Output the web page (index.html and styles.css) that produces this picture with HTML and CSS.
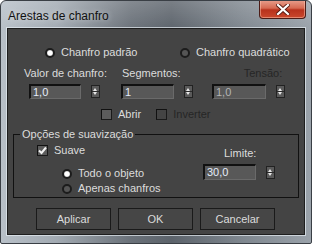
FILE: index.html
```html
<!DOCTYPE html>
<html lang="pt">
<head>
  <meta charset="UTF-8">
  <title>Arestas de chanfro</title>
  <link rel="stylesheet" href="styles.css">
</head>
<body>
  <div class="window">
    <div class="titlebar">
      <span class="title">Arestas de chanfro</span>
      <div class="close">
        <svg width="14" height="11" viewBox="0 0 14 11">
          <path d="M2 1 L12 10 M12 1 L2 10" stroke="#5a1d14" stroke-width="4" stroke-linecap="square"/>
          <path d="M2 1 L12 10 M12 1 L2 10" stroke="#ffffff" stroke-width="2.2" stroke-linecap="square"/>
        </svg>
      </div>
    </div>

    <div class="content">
      <div class="row type-row">
        <label class="option first"><span class="radio on"></span>Chanfro padrão</label>
        <label class="option"><span class="radio"></span>Chanfro quadrático</label>
      </div>

      <div class="row label-row">
        <span class="lbl lbl-amount">Valor de chanfro:</span>
        <span class="lbl lbl-segs">Segmentos:</span>
        <span class="lbl lbl-tension disabled">Tensão:</span>
      </div>

      <div class="row spin-row">
        <div class="spin"><div class="field w52">1,0</div><div class="spinner"></div></div>
        <div class="spin s2"><div class="field w53">1</div><div class="spinner"></div></div>
        <div class="spin s3"><div class="field w54 dim">1,0</div><div class="spinner"></div></div>
      </div>

      <div class="row check-row">
        <label class="option"><span class="check"></span>Abrir</label>
        <label class="option disabled inv"><span class="check off"></span>Inverter</label>
      </div>

      <fieldset class="group">
        <legend>Opções de suavização</legend>
        <div class="group-body">
          <div class="group-left">
            <label class="option"><span class="check checked">
              <svg width="9" height="9" viewBox="0 0 9 9"><path d="M1 4.5 L3.5 7 L8 1.5" fill="none" stroke="#f2f2f2" stroke-width="2"/></svg>
            </span>Suave</label>
            <label class="option sub first-sub"><span class="radio on"></span>Todo o objeto</label>
            <label class="option sub"><span class="radio"></span>Apenas chanfros</label>
          </div>
          <div class="group-right">
            <span class="lbl">Limite:</span>
            <div class="spin"><div class="field w53 tall">30,0</div><div class="spinner"></div></div>
          </div>
        </div>
      </fieldset>

      <div class="buttons">
        <button>Aplicar</button>
        <button>OK</button>
        <button>Cancelar</button>
      </div>
    </div>
  </div>
</body>
</html>
```

FILE: styles.css
```css
body {
  margin: 0;
  font-family: 'Liberation Sans', Arial, sans-serif;
}

.window {
  width: 312px;
  height: 244px;
  box-sizing: border-box;
  border: 1px solid #3a3f45;
  border-radius: 6px 6px 2px 2px;
  background:
    linear-gradient(180deg, rgba(255,255,255,0.18) 0px, rgba(255,255,255,0) 30px),
    linear-gradient(90deg, #b8c0c8 0%, #a2aab2 18%, #6a7179 42%, #5c636b 55%, #7f878f 78%, #9aa2aa 100%);
  overflow: hidden;
}

.titlebar {
  height: 27px;
  display: flex;
  align-items: flex-start;
  justify-content: space-between;
}

.title {
  font-size: 12px;
  color: #111;
  margin: 8px 0 0 7px;
  text-shadow: 0 0 6px rgba(255,255,255,0.6);
}

.close {
  width: 47px;
  height: 19px;
  box-sizing: border-box;
  margin: -1px 5px 0 0;
  border: 1px solid #4c1c16;
  border-top: none;
  border-radius: 0 0 4px 4px;
  background: linear-gradient(180deg, #e8a08e 0%, #d66a52 45%, #b8321c 55%, #c9472c 100%);
  box-shadow: inset 0 0 0 1px rgba(255,200,180,0.5);
  display: flex;
  align-items: center;
  justify-content: center;
}

.content {
  margin: 0 0 0 6px;
  width: 298px;
  height: 207px;
  box-sizing: border-box;
  border: 1px solid #1e1e1e;
  box-shadow: 0 0 0 1px rgba(230,236,242,0.7);
  background: #444444;
  color: #dcdcdc;
  font-size: 11px;
  line-height: 13px;
}

.row {
  display: flex;
  align-items: center;
  height: 13px;
}

.option {
  display: inline-flex;
  align-items: center;
  gap: 6px;
  white-space: nowrap;
}

.radio {
  width: 10px;
  height: 10px;
  box-sizing: border-box;
  border-radius: 50%;
  border: 2px solid #1c1c1c;
  background: #555;
}

.radio.on {
  background: radial-gradient(circle, #ffffff 0 2px, #c8c8c8 3px);
}

.type-row {
  margin-top: 17px;
  padding-left: 37px;
}

.type-row .first {
  width: 135px;
}

.label-row {
  margin-top: 8px;
}

.lbl-amount { margin-left: 16px; }
.lbl-segs { margin-left: 15px; }
.lbl-tension { margin-left: 63px; }

.disabled {
  color: #262626;
}

.spin-row {
  margin-top: 4px;
  height: 15px;
  padding-left: 21px;
}

.spin {
  display: flex;
  align-items: center;
  gap: 10px;
}

.s2 { margin-left: 21px; }
.s3 { margin-left: 19px; }

.field {
  height: 15px;
  box-sizing: border-box;
  background: #585858;
  border-top: 2px solid #111;
  border-left: 2px solid #111;
  border-right: 1px solid #6a6a6a;
  border-bottom: 1px solid #6a6a6a;
  color: #e4ecfa;
  padding-left: 2px;
  line-height: 12px;
}

.field.tall {
  height: 16px;
  line-height: 13px;
}

.field.dim {
  color: #b4b4b4;
}

.w52 { width: 52px; }
.w53 { width: 53px; }
.w54 { width: 54px; }

.spinner {
  width: 9px;
  height: 13px;
  box-sizing: border-box;
  border: 1px solid #222;
  background:
    linear-gradient(#2a2a2a, #2a2a2a) center / 100% 1px no-repeat,
    #5a5a5a;
  position: relative;
}

.spinner::before,
.spinner::after {
  content: "";
  position: absolute;
  left: 1px;
  border-left: 2.5px solid transparent;
  border-right: 2.5px solid transparent;
}

.spinner::before {
  top: 2px;
  border-bottom: 3px solid #e8e8e8;
}

.spinner::after {
  bottom: 2px;
  border-top: 3px solid #e8e8e8;
}

.check-row {
  margin-top: 9px;
  height: 13px;
  padding-left: 93px;
}

.check-row .inv {
  margin-left: 15px;
}

.check {
  width: 11px;
  height: 11px;
  box-sizing: border-box;
  border: 1px solid #1a1a1a;
  border-top-color: #111;
  border-left-color: #111;
  background: #5c5c5c;
  display: inline-flex;
  align-items: center;
  justify-content: center;
}

.check.off {
  background: #444;
}

.group {
  margin: 6px 5px 0 5px;
  padding: 0;
  border: 1px solid #111;
  height: 71px;
  box-sizing: border-box;
  min-width: 0;
}

.group legend {
  margin-left: 6px;
  padding: 0 2px;
  line-height: 14px;
}

.group-body {
  display: flex;
}

.group-left {
  display: flex;
  flex-direction: column;
  padding: 3px 0 0 23px;
  width: 166px;
}

.group-left .sub {
  margin-left: 25px;
  height: 15px;
}

.group-left .first-sub {
  margin-top: 9px;
}

.group-right {
  display: flex;
  flex-direction: column;
  align-items: flex-start;
  padding-top: 6px;
}

.group-right .lbl {
  margin-left: 21px;
}

.group-right .spin {
  margin-top: 4px;
}

.buttons {
  display: flex;
  gap: 7px;
  padding-left: 28px;
  margin-top: 10px;
}

button {
  width: 75px;
  height: 22px;
  background: #464646;
  border: 1px solid #1a1a1a;
  color: #dcdcdc;
  font-family: 'Liberation Sans', Arial, sans-serif;
  font-size: 11px;
  padding: 0;
}
```
